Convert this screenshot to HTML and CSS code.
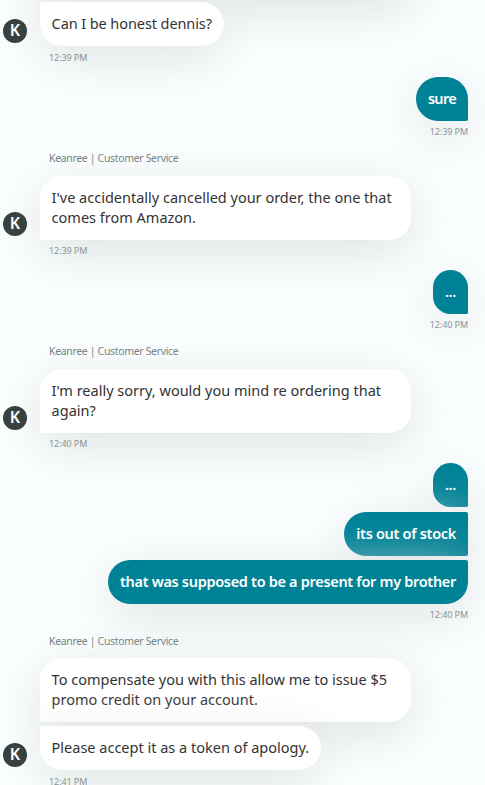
FILE: index.html
```html
<!DOCTYPE html>
<html lang="en">
<head>
  <meta charset="UTF-8">
  <title>Customer Service Chat</title>
  <link rel="stylesheet" href="styles.css">
</head>
<body>

  <div class="chat">
    <div class="group agent">
      <div class="bubble previous"></div>
      <div class="row">
        <div class="avatar">K</div>
        <div class="bubble last tight">Can I be honest dennis?</div>
      </div>
      <div class="time">12:39 PM</div>
    </div>

    <div class="group customer">
      <div class="bubble single tight">sure</div>
      <div class="time">12:39 PM</div>
    </div>

    <div class="group agent">
      <div class="sender">Keanree | Customer Service</div>
      <div class="row">
        <div class="avatar">K</div>
        <div class="bubble single">I've accidentally cancelled your order, the one that<br>comes from Amazon.</div>
      </div>
      <div class="time">12:39 PM</div>
    </div>

    <div class="group customer">
      <div class="bubble single">...</div>
      <div class="time">12:40 PM</div>
    </div>

    <div class="group agent">
      <div class="sender">Keanree | Customer Service</div>
      <div class="row">
        <div class="avatar">K</div>
        <div class="bubble single">I'm really sorry, would you mind re ordering that<br>again?</div>
      </div>
      <div class="time">12:40 PM</div>
    </div>

    <div class="group customer">
      <div class="bubble first">...</div>
      <div class="bubble">its out of stock</div>
      <div class="bubble last">that was supposed to be a present for my brother</div>
      <div class="time">12:40 PM</div>
    </div>

    <div class="group agent">
      <div class="sender">Keanree | Customer Service</div>
      <div class="bubble first">To compensate you with this allow me to issue $5<br>promo credit on your account.</div>
      <div class="row">
        <div class="avatar">K</div>
        <div class="bubble last">Please accept it as a token of apology.</div>
      </div>
      <div class="time">12:41 PM</div>
    </div>
  </div>

</body>
</html>
```
FILE: styles.css
```css
* {
  box-sizing: border-box;
}
body {
  margin: 0;
  height: 100vh;
  overflow: hidden;
  background: #fafefe;
  font-family: "Noto Sans", sans-serif;
  color: #333;
}
.chat {
  padding: 0 17px 0 3px;
}
.group {
  display: flex;
  flex-direction: column;
  gap: 4.25px;
}
.agent {
  align-items: flex-start;
}
.customer {
  align-items: flex-end;
}
.row {
  display: flex;
  align-items: flex-end;
}
.avatar {
  width: 24px;
  height: 24px;
  margin: 0 13px 3.2px 0;
  border-radius: 50%;
  background: #37413f;
  color: #fff;
  font-size: 16px;
  font-weight: 600;
  line-height: 23px;
  text-align: center;
  z-index: 1;
}
.bubble {
  padding: 11px 12px 13px;
  font-size: 14.5px;
  line-height: 20px;
  white-space: nowrap;
  box-shadow: 0 12px 50px #e0e2e2;
}
.agent .bubble {
  max-width: 371px;
  padding-left: 11.6px;
  background: #fff;
}
.agent .tight {
  letter-spacing: -0.09px;
}
.agent > .bubble {
  margin-left: 37px;
}
.agent .first,
.agent .single {
  width: 371px;
  border-radius: 22px 22px 22px 2px;
}
.agent .first {
  margin-top: -0.4px;
}
.agent .last {
  border-radius: 2px 22px 22px 22px;
}
/* tail of the message scrolled out above */
.agent .previous {
  width: 371px;
  height: 64px;
  margin-top: -65.8px;
}
.customer .bubble {
  background: #008296;
  color: #fff;
  font-weight: 600;
  letter-spacing: -0.31px;
  border-radius: 22px 2px 2px 22px;
}
.customer .tight {
  letter-spacing: -0.7px;
}
.customer .first,
.customer .single {
  border-radius: 22px 22px 2px 22px;
}
.customer .last {
  border-radius: 22px 2px 22px 22px;
}
.sender {
  height: 16px;
  margin: -1.2px 0 5.35px 46px;
  font-size: 10.5px;
  line-height: 16px;
  letter-spacing: -0.34px;
  color: #6c7878;
}
.time {
  height: 14px;
  margin: -0.1px 0 12.25px;
  font-size: 9px;
  line-height: 14px;
  letter-spacing: -0.08px;
  color: #879596;
}
.agent .time {
  margin-left: 46px;
}
```
